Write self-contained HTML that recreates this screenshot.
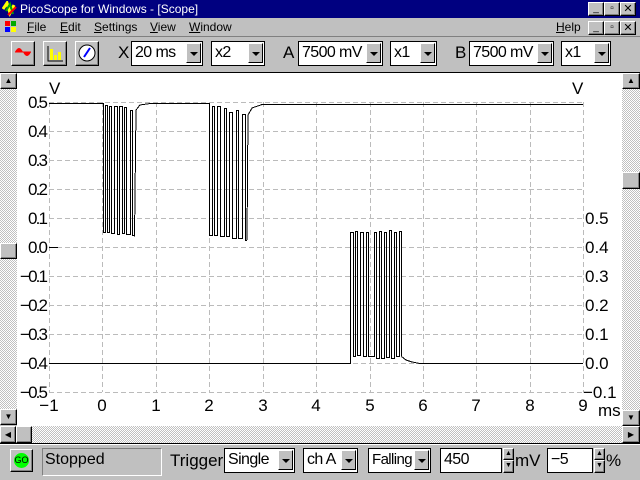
<!DOCTYPE html>
<html><head><meta charset="utf-8"><style>
*{margin:0;padding:0;box-sizing:border-box}
body{width:640px;height:480px;overflow:hidden;background:#c0c0c0;font-family:"Liberation Sans",sans-serif;position:relative}
.a{position:absolute}
.title{left:0;top:0;width:640px;height:18px;background:#000080;color:#fff;font-size:12px;line-height:18px;padding-left:20px}
.btn{position:absolute;background:#c0c0c0;border:1px solid;border-color:#fff #000 #000 #fff;box-shadow:inset -1px -1px #808080}
.menu{top:18px;height:18px;font-size:12px;line-height:18px}
.edit{position:absolute;background:#fff;border:1px solid #000;font-size:16px;line-height:22px;padding-left:3px;overflow:hidden;white-space:nowrap;letter-spacing:-0.6px}
.dd{position:absolute;right:1px;top:1px;width:15px;height:20px;background:#c0c0c0;border:1px solid;border-color:#fff #000 #000 #fff}
.dd:after{content:"";position:absolute;left:3px;top:8px;border:4px solid transparent;border-top:4px solid #000;border-bottom:0}
.lbl{position:absolute;font-size:17px}
.hatch{background:repeating-conic-gradient(#c0c0c0 0 25%,#fff 0 50%) 0 0/2px 2px}
</style></head><body>
<div class="a title">PicoScope for Windows - [Scope]</div>
<svg class="a" style="left:2px;top:1px" width="16" height="16"><path d="M1 8 L5 2 L8 12 L12 4" stroke="#ff0" stroke-width="3" fill="none"/><path d="M4 10 L8 3 L11 13" stroke="#0a0" stroke-width="2" fill="none"/><path d="M6 14 L14 6" stroke="#f00" stroke-width="2"/></svg>
<div class="btn" style="left:588px;top:2px;width:16px;height:14px;font-size:10px;text-align:center">_</div>
<div class="btn" style="left:604px;top:2px;width:16px;height:14px;font-size:10px;text-align:center">▫</div>
<div class="btn" style="left:620px;top:2px;width:16px;height:14px;font-size:11px;text-align:center;line-height:12px">✕</div>
<div class="a menu" style="left:2px;width:16px"><svg width="16" height="16" style="margin-top:1px"><rect x="3" y="2" width="5" height="5" fill="#f00"/><rect x="9" y="2" width="5" height="5" fill="#0a0"/><rect x="3" y="8" width="5" height="5" fill="#00f"/><rect x="9" y="8" width="5" height="5" fill="#ff0"/></svg></div>
<div class="a menu" style="left:27px"><u>F</u>ile</div>
<div class="a menu" style="left:60px"><u>E</u>dit</div>
<div class="a menu" style="left:94px"><u>S</u>ettings</div>
<div class="a menu" style="left:150px"><u>V</u>iew</div>
<div class="a menu" style="left:189px"><u>W</u>indow</div>
<div class="a menu" style="left:556px"><u>H</u>elp</div>
<div class="btn" style="left:588px;top:21px;width:16px;height:14px;font-size:10px;text-align:center">_</div>
<div class="btn" style="left:604px;top:21px;width:16px;height:14px;font-size:10px;text-align:center">▫</div>
<div class="btn" style="left:620px;top:21px;width:16px;height:14px;font-size:11px;text-align:center;line-height:12px">✕</div>
<div class="a" style="left:0;top:36px;width:640px;height:37px;border-top:1px solid #808080;border-bottom:1px solid #000"></div>
<div class="btn" style="left:11px;top:41px;width:24px;height:25px"><svg width="22" height="22"><path d="M3 10 Q7 2 11 10 Q15 18 19 10 Z" fill="#f00"/><path d="M3 10H19" stroke="#f00"/></svg></div>
<div class="btn" style="left:43px;top:41px;width:24px;height:25px"><svg width="22" height="22"><path d="M4 4V19H19" stroke="#000" fill="none"/><rect x="6" y="7" width="3" height="11" fill="#ff0"/><rect x="10" y="13" width="3" height="5" fill="#ff0"/><rect x="14" y="10" width="3" height="8" fill="#ff0"/></svg></div>
<div class="btn" style="left:75px;top:41px;width:24px;height:25px"><svg width="22" height="22"><circle cx="11" cy="11" r="8" fill="#fff" stroke="#000"/><path d="M8 15 L14 6" stroke="#00f" stroke-width="2"/></svg></div>
<div class="lbl" style="left:118px;top:43px">X</div>
<div class="edit" style="left:131px;top:41px;width:72px;height:25px">20 ms<div class="dd"></div></div>
<div class="edit" style="left:211px;top:41px;width:54px;height:25px">x2<div class="dd"></div></div>
<div class="lbl" style="left:283px;top:43px">A</div>
<div class="edit" style="left:298px;top:41px;width:85px;height:25px">7500 mV<div class="dd"></div></div>
<div class="edit" style="left:390px;top:41px;width:47px;height:25px">x1<div class="dd"></div></div>
<div class="lbl" style="left:455px;top:43px">B</div>
<div class="edit" style="left:469px;top:41px;width:85px;height:25px">7500 mV<div class="dd"></div></div>
<div class="edit" style="left:561px;top:41px;width:50px;height:25px">x1<div class="dd"></div></div>
<div class="a hatch" style="left:0;top:73px;width:17px;height:352px"></div>
<div class="btn" style="left:0;top:73px;width:17px;height:16px;font-size:8px;text-align:center;line-height:14px">▲</div>
<div class="btn" style="left:0;top:243px;width:17px;height:16px"></div>
<div class="btn" style="left:0;top:409px;width:17px;height:16px;font-size:8px;text-align:center;line-height:14px">▼</div>
<div class="a hatch" style="left:622px;top:73px;width:18px;height:353px"></div>
<div class="btn" style="left:622px;top:73px;width:18px;height:16px;font-size:8px;text-align:center;line-height:14px">▲</div>
<div class="btn" style="left:622px;top:172px;width:18px;height:17px"></div>
<div class="btn" style="left:622px;top:410px;width:18px;height:16px;font-size:8px;text-align:center;line-height:14px">▼</div>
<div class="a hatch" style="left:0;top:426px;width:622px;height:17px"></div>
<div class="btn" style="left:0;top:426px;width:16px;height:17px;font-size:8px;text-align:center;line-height:15px">◀</div>
<div class="btn" style="left:16px;top:426px;width:16px;height:17px"></div>
<div class="btn" style="left:622px;top:426px;width:18px;height:17px;font-size:8px;text-align:center;line-height:15px">▶</div>
<svg class="a" style="left:17px;top:73px" width="605" height="353" viewBox="17 73 605 353" font-family="Liberation Sans" font-size="17">
<rect x="17" y="73" width="605" height="353" fill="#fff"/>
<g stroke="#bbb" stroke-dasharray="5,3" fill="none" shape-rendering="crispEdges">
<path d="M49.5 102V392M102.5 102V392M156.5 102V392M209.5 102V392M263.5 102V392M316.5 102V392M370.5 102V392M423.5 102V392M476.5 102V392M530.5 102V392M583.5 102V392"/>
<path d="M49 102.5H583M49 131.5H583M49 160.5H583M49 189.5H583M49 218.5H583M49 247.5H583M49 276.5H583M49 305.5H583M49 334.5H583M49 363.5H583M49 392.5H583"/>
</g>
<path d="M49 247.5H58" stroke="#000" shape-rendering="crispEdges"/>
<g fill="#000">
<text x="48" y="108" text-anchor="end" textLength="20">0.5</text>
<text x="48" y="137" text-anchor="end" textLength="20">0.4</text>
<text x="48" y="166" text-anchor="end" textLength="20">0.3</text>
<text x="48" y="195" text-anchor="end" textLength="20">0.2</text>
<text x="48" y="224" text-anchor="end" textLength="20">0.1</text>
<text x="48" y="253" text-anchor="end" textLength="20">0.0</text>
<text x="48" y="282" text-anchor="end" textLength="28">−0.1</text>
<text x="48" y="311" text-anchor="end" textLength="28">−0.2</text>
<text x="48" y="340" text-anchor="end" textLength="28">−0.3</text>
<text x="48" y="369" text-anchor="end" textLength="28">−0.4</text>
<text x="48" y="398" text-anchor="end" textLength="28">−0.5</text>
<text x="49" y="94">V</text><text x="572" y="94">V</text>
<text x="585" y="224">0.5</text><text x="585" y="253">0.4</text><text x="585" y="282">0.3</text><text x="585" y="311">0.2</text><text x="585" y="340">0.1</text><text x="585" y="369">0.0</text><text x="583" y="398">−0.1</text>
<g text-anchor="middle">
<text x="49" y="411">−1</text><text x="102" y="411">0</text><text x="156" y="411">1</text><text x="209" y="411">2</text><text x="263" y="411">3</text><text x="316" y="411">4</text><text x="370" y="411">5</text><text x="423" y="411">6</text><text x="476" y="411">7</text><text x="530" y="411">8</text><text x="583" y="411">9</text>
</g>
<text x="598" y="416">ms</text>
</g>
<g stroke="#000" fill="none" stroke-width="1" shape-rendering="crispEdges">
<path d="M49 103.5H103.5V232.5H105.5V105.5H107.5V232.5H109.5V106.5H111.5V233.5H114.5V106.5H117.5V234.5H119.5V106.5H122.5V233.5H124.5V107.5H126.5V234.5H130.5V110.5H132.5V235.5H134.5V236.5"/>
<path d="M134.5 236.5L136 110L140 105L150 103.5H209.5V235.5H212.5V106.5H214.5V235.5H217.5V106.5H220.5V236.5H224.5V108.5H226.5V236.5H229.5V112.5H232.5V238.5H236.5V110.5H238.5V238.5H242.5V114.5H245.5V240.5H247"/>
<path d="M247 240L248 115L252 108L262 104.5H583"/>
<path d="M49 363.5H350.5V232.5H353.5V356.5H355.5V231.5H357.5V355.5H360.5V232.5H363.5V356.5H366.5V232.5H368.5V356.5H374.5V232.5H376.5V358.5H379.5V231.5H381.5V358.5H384.5V232.5H386.5V357.5H389.5V230.5H391.5V358.5H394.5V232.5H396.5V356.5H399.5V231.5H401.5V356.5"/>
<path d="M401.5 356.5L406 360L412 362L420 363.5H583"/>
</g>
</svg>
<div class="a" style="left:0;top:443px;width:640px;height:37px;border-top:1px solid #000;box-shadow:inset 0 1px #fff"></div>
<div class="btn" style="left:10px;top:449px;width:23px;height:23px"><div style="position:absolute;left:3px;top:3px;width:15px;height:15px;border-radius:50%;background:#0f0;font-size:9px;text-align:center;line-height:15px">GO</div></div>
<div class="a" style="left:42px;top:448px;width:120px;height:28px;border:1px solid;border-color:#808080 #fff #fff #808080;font-size:16px;padding:2px 0 0 2px">Stopped</div>
<div class="lbl" style="left:170px;top:451px">Trigger</div>
<div class="edit" style="left:224px;top:448px;width:71px;height:25px">Single<div class="dd"></div></div>
<div class="edit" style="left:303px;top:448px;width:55px;height:25px">ch A<div class="dd"></div></div>
<div class="edit" style="left:368px;top:448px;width:63px;height:25px;font-size:15px">Falling<div class="dd"></div></div>
<div class="edit" style="left:440px;top:448px;width:62px;height:25px">450</div>
<div class="btn" style="left:503px;top:448px;width:11px;height:12px;font-size:7px;line-height:10px;text-align:center">▲</div>
<div class="btn" style="left:503px;top:460px;width:11px;height:13px;font-size:7px;line-height:10px;text-align:center">▼</div>
<div class="lbl" style="left:515px;top:451px">mV</div>
<div class="edit" style="left:547px;top:448px;width:46px;height:25px">−5</div>
<div class="btn" style="left:594px;top:448px;width:11px;height:12px;font-size:7px;line-height:10px;text-align:center">▲</div>
<div class="btn" style="left:594px;top:460px;width:11px;height:13px;font-size:7px;line-height:10px;text-align:center">▼</div>
<div class="lbl" style="left:606px;top:451px">%</div>
</body></html>
